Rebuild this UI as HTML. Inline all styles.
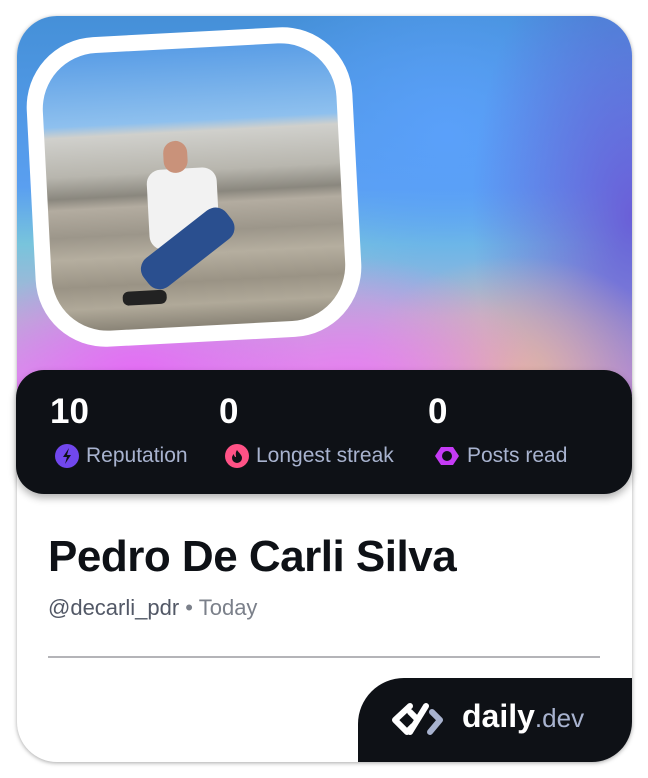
<!DOCTYPE html>
<html><head><style>
*{margin:0;padding:0;box-sizing:border-box}
body{width:648px;height:778px;background:#fff;font-family:"Liberation Sans",sans-serif;position:relative;overflow:hidden}
.card{position:absolute;left:17px;top:16px;width:615px;height:746px;border-radius:40px;background:#fff;box-shadow:0 1px 4px rgba(0,0,0,.35);overflow:hidden}
.top{position:absolute;left:0;top:0;width:615px;height:380px;
background:
radial-gradient(ellipse 180px 120px at 120px 360px,#e46cf5 0%,rgba(228,108,245,0) 100%),
radial-gradient(ellipse 200px 140px at 330px 380px,#e87df0 0%,rgba(232,125,240,0) 100%),
radial-gradient(ellipse 160px 120px at 500px 360px,#e0b6a0 0%,rgba(224,182,160,0) 100%),
radial-gradient(ellipse 160px 300px at 615px 200px,#6a5fd8 0%,rgba(106,95,216,0) 100%),
radial-gradient(ellipse 200px 180px at 430px 120px,#5aa0fa 0%,rgba(90,160,250,0) 100%),
linear-gradient(180deg,#4590d8 0%,#5a9ff0 45%,#78c4dc 60%,#b7b0d6 80%,#e18ef0 100%)}
.frame{position:absolute;left:14px;top:16px;width:326px;height:310px;background:#fff;border-radius:70px;transform:rotate(-3deg)}
.photo{position:absolute;left:16px;top:16px;width:294px;height:278px;border-radius:56px;overflow:hidden;
background:linear-gradient(180deg,#5b9ee6 0%,#8ec0ee 26%,#d0d0cc 30%,#b8b6ae 44%,#8a877e 52%,#b3aca0 56%,#9c968a 66%,#b5ae9f 74%,#9a9385 84%,#b0a999 92%,#8a8477 100%)}
.stats{position:absolute;left:16px;top:370px;width:616px;height:124px;background:#0e1116;border-radius:28px;box-shadow:0 4px 8px rgba(0,0,0,.3);color:#fff}
.num{position:absolute;top:22px;font-size:35px;font-weight:bold}
.lab{position:absolute;top:73px;font-size:21px;color:#a8b3cf;display:flex;align-items:center;gap:6px}
.name{position:absolute;left:48px;top:532px;font-size:44px;font-weight:bold;color:#0e1116;letter-spacing:-.5px}
.handle{position:absolute;left:48px;top:595px;font-size:22px;color:#525866}
.handle span{color:#7b808a}
.div{position:absolute;left:48px;top:656px;width:552px;height:2px;background:#b4b4b8}
.logo{position:absolute;left:358px;top:678px;width:274px;height:84px;background:#0e1116;border-top-left-radius:46px;border-bottom-right-radius:40px}
</style></head><body>
<div class="card">
<div class="top"></div>
<div class="frame"><div class="photo">
<div style="position:absolute;left:100px;top:120px;width:70px;height:80px;background:#f2f2f2;border-radius:14px"></div>
<div style="position:absolute;left:118px;top:92px;width:24px;height:32px;background:#c9927a;border-radius:12px"></div>
<div style="position:absolute;left:85px;top:182px;width:105px;height:36px;background:#2a4f8f;border-radius:14px;transform:rotate(-35deg)"></div>
<div style="position:absolute;left:70px;top:240px;width:44px;height:14px;background:#222;border-radius:6px"></div>
</div></div>
</div>
<div class="stats">
<div class="num" style="left:34px">10</div>
<div class="num" style="left:203px">0</div>
<div class="num" style="left:412px">0</div>
<div class="lab" style="left:38px"><svg width="26" height="26" viewBox="0 0 26 26"><circle cx="13" cy="13" r="12" fill="#7147ed"/><path d="M15 5l-6 9h4l-2 7 6-9h-4z" fill="#0e1116"/></svg>Reputation</div>
<div class="lab" style="left:208px"><svg width="26" height="26" viewBox="0 0 26 26"><circle cx="13" cy="13" r="12" fill="#ff5286"/><path d="M13 7c2 3 5 5 5 8a5 5 0 01-10 0c0-2 1-3 2-4 0 2 1 3 2 3 0-2-1-4 1-7z" fill="#0e1116"/></svg>Longest streak</div>
<div class="lab" style="left:417px"><svg width="28" height="26" viewBox="0 0 28 26"><path d="M8 4h12l6 9-6 9H8L2 13z" fill="#c53bf5"/><circle cx="14" cy="13" r="5" fill="#0e1116"/></svg>Posts read</div>
</div>
<div class="name">Pedro De Carli Silva</div>
<div class="handle">@decarli_pdr <span>•</span> <span>Today</span></div>
<div class="div"></div>
<div class="logo">
<svg style="position:absolute;left:32px;top:24px" width="64" height="36" viewBox="0 0 64 36"><path d="M20 4L5 18l12 12 6-6" fill="none" stroke="#fff" stroke-width="6" stroke-linejoin="round" stroke-linecap="round"/><path d="M36 4L20 30" stroke="#fff" stroke-width="6" stroke-linecap="round"/><path d="M20 10l6 6" stroke="#fff" stroke-width="6" stroke-linecap="round"/><path d="M42 10l8 8-10 12" fill="none" stroke="#a8b3cf" stroke-width="6" stroke-linejoin="round" stroke-linecap="round"/></svg>
<div style="position:absolute;left:104px;top:20px;font-size:32px;font-weight:bold;color:#fff">daily<span style="font-weight:normal;font-size:26px;color:#a8b3cf">.dev</span></div>
</div>
</body></html>
